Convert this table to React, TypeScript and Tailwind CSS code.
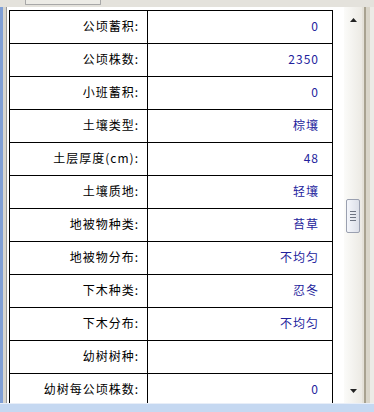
const rows: [string, string][] = [
  ["公顷蓄积:", "0"],
  ["公顷株数:", "2350"],
  ["小班蓄积:", "0"],
  ["土壤类型:", "棕壤"],
  ["土层厚度(cm):", "48"],
  ["土壤质地:", "轻壤"],
  ["地被物种类:", "苔草"],
  ["地被物分布:", "不均匀"],
  ["下木种类:", "忍冬"],
  ["下木分布:", "不均匀"],
  ["幼树树种:", ""],
  ["幼树每公顷株数:", "0"],
];

const font = { fontFamily: '"Noto Sans CJK SC", "Noto Sans", sans-serif' };

function Arrow({ up }: { up?: boolean }) {
  return (
    <svg width="7" height="4" viewBox="0 0 7 4">
      <path d={up ? "M3.5 0 L7 4 L0 4 Z" : "M0 0 L7 0 L3.5 4 Z"} fill="#222" />
    </svg>
  );
}

export default function App() {
  return (
    <div
      className="flex h-[412px] w-[374px] flex-col overflow-hidden bg-white"
      style={font}
    >
      {/* top strip with horizontal thumb */}
      <div className="flex h-[7px] shrink-0 bg-[#e4e2dc]">
        <div className="ml-[25px] h-[5px] w-[76px] rounded-b-[1px] border border-t-0 border-[#a8a8a8] bg-[#ecebe6]" />
      </div>

      <div className="flex min-h-0 flex-1">
        {/* left window frame */}
        <div className="flex w-[9px] shrink-0">
          <div className="w-[3px] bg-[#7f9fd6]" />
          <div className="w-[3px] bg-[#d8d6cf]" />
          <div className="w-[1px] bg-[#9a9a9a]" />
          <div className="w-[2px] bg-white" />
        </div>

        {/* table */}
        <div className="min-w-0 flex-1 overflow-hidden pt-[3px]">
          <div className="w-[324px] border-l border-t border-black">
            {rows.map(([label, value]) => (
              <div key={label} className="flex h-[33px] border-b border-black">
                <div className="flex w-[138px] items-center justify-end border-r border-black pb-[2px] pr-[8px] text-[12px] tracking-[1px] text-black">
                  {label}
                </div>
                <div className="flex flex-1 items-center justify-end border-r border-black pb-[2px] pr-[13px] text-[12px] tracking-[1px] text-[#22229c]">
                  {value}
                </div>
              </div>
            ))}
          </div>
        </div>

        {/* vertical scrollbar */}
        <div className="relative flex w-[18px] shrink-0 flex-col items-center bg-gradient-to-r from-[#fbfbf9] to-[#eceae4]">
          <div className="mt-[6px] flex h-[14px] items-center">
            <Arrow up />
          </div>
          <div className="mt-[172px] flex h-[34px] w-[14px] flex-col items-center justify-center gap-[2px] rounded-[2px] border border-[#9aa0b0] bg-gradient-to-r from-[#f4f6fb] to-[#dcdfe8]">
            <div className="h-[1px] w-[6px] bg-[#6e7482]" />
            <div className="h-[1px] w-[6px] bg-[#6e7482]" />
            <div className="h-[1px] w-[6px] bg-[#6e7482]" />
            <div className="h-[1px] w-[6px] bg-[#6e7482]" />
          </div>
          <div className="mt-auto mb-[6px] flex h-[12px] items-center">
            <Arrow />
          </div>
        </div>

        {/* right window frame */}
        <div className="flex w-[12px] shrink-0">
          <div className="w-[2px] bg-[#e4e1d8]" />
          <div className="w-[2px] bg-[#a8a290]" />
          <div className="w-[4px] bg-[#d9d5c9]" />
          <div className="w-[4px] bg-[#ecebe6]" />
        </div>
      </div>

      {/* bottom frame */}
      <div className="h-[9px] shrink-0 border-t border-[#e8eef8] bg-[#c5d8f1]" />
    </div>
  );
}
